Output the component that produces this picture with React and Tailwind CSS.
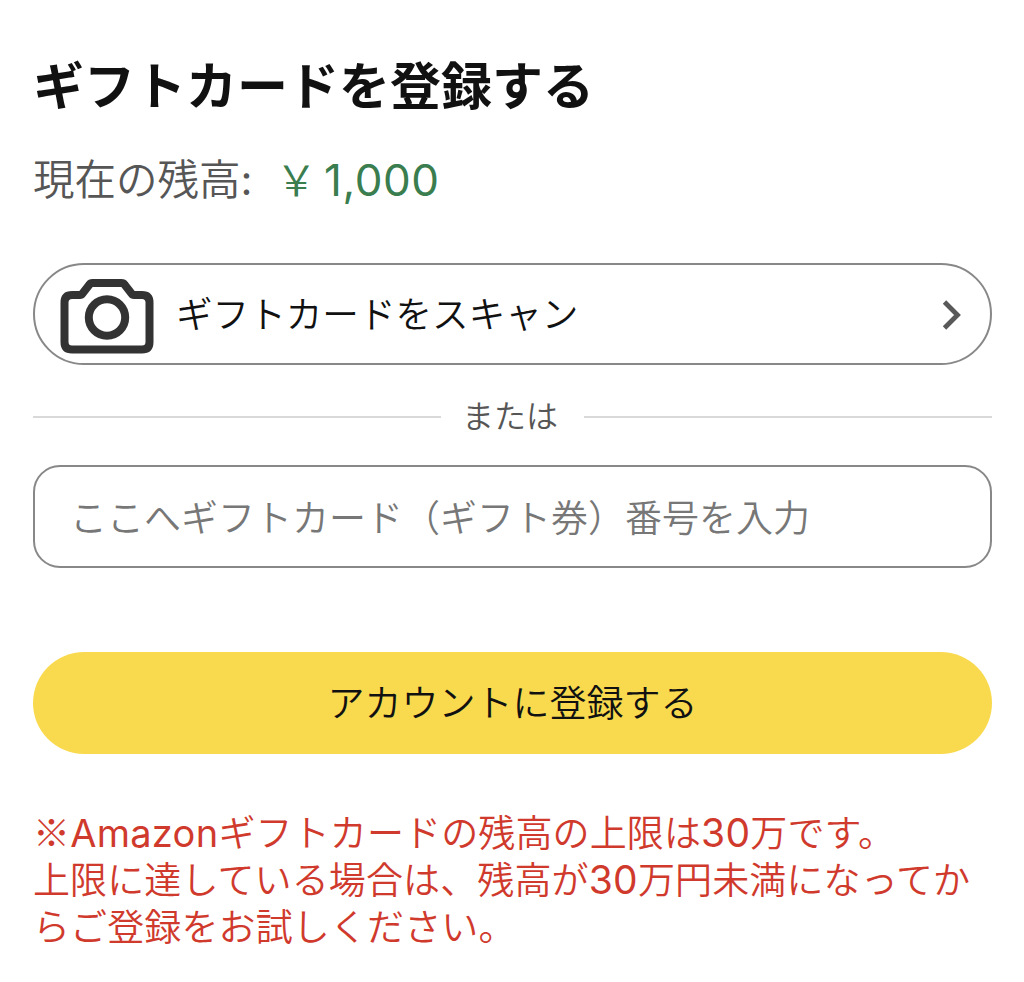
export default function App() {
  return (
    <main className="h-[982px] w-[1024px] overflow-hidden bg-white px-[33px] pt-[48px] font-['Noto_Sans_CJK_JP',sans-serif] font-[350] text-[#111]">
      <h1 className="h-[70px] whitespace-nowrap text-[51px] leading-[70px] font-bold">ギフトカードを登録する</h1>
      <div className="mt-[31px] flex h-[60px] items-center whitespace-nowrap text-[41.5px] text-[#565656]">
        <span>現在の残高<span className="font-['Inter',sans-serif] font-normal">:</span></span>
        <span className="-mt-[2px] ml-[23px] text-[#3a7d4e]">￥<span className="ml-[7px] font-['Inter',sans-serif] text-[44px] leading-none font-normal tracking-[0.6px]">1,000</span></span>
      </div>
      <button className="mt-[54px] flex h-[102px] w-[959px] items-center rounded-full border-2 border-[#888] pr-[28px] pl-[25px]">
        <svg className="mt-[5px]" width="94" height="75" viewBox="0 0 94 75" fill="none" stroke="#333" strokeWidth="8" strokeLinejoin="round">
          <path d="M12 16H20Q21.500 16 22.500 14.500L29.500 5.500Q30.500 4 32.500 4H61.500Q63.500 4 64.500 5.500L71.500 14.500Q72.500 16 74 16H82Q89.500 16 89.500 23.500V63Q89.500 70.500 82 70.500H12Q4.500 70.500 4.500 63V23.500Q4.500 16 12 16Z" />
          <circle cx="47" cy="38.500" r="18.200" />
        </svg>
        <span className="-mt-[3px] ml-[22px] whitespace-nowrap text-[36.6px] leading-[50px]">ギフトカードをスキャン</span>
        <svg className="mt-[2px] ml-auto" width="20" height="32" viewBox="0 0 20 32" fill="none" stroke="#595959" strokeWidth="4.800">
          <path d="M2.500 3L15.500 16L2.500 29" />
        </svg>
      </button>
      <div className="flex h-[100px] w-[959px] items-center text-[32px] text-[#565656]">
        <span className="mt-[3px] h-[2px] w-[408px] bg-[#d9d9d9]" />
        <span className="-mt-[3px] w-[143px] pr-[5px] text-center whitespace-nowrap">または</span>
        <span className="mt-[3px] h-[2px] w-[408px] bg-[#d9d9d9]" />
      </div>
      <div className="flex h-[103px] w-[959px] items-center rounded-[27px] border-2 border-[#888] px-[35px]">
        <span className="mt-[1px] whitespace-nowrap text-[37px] text-[#777]">ここへギフトカード（ギフト券）番号を入力</span>
      </div>
      <button className="mt-[84px] flex h-[102px] w-[959px] items-center justify-center rounded-full bg-[#f9da4f] pb-[2px] text-[37px]">アカウントに登録する</button>
      <p className="mt-[54px] whitespace-nowrap text-[37px] leading-[47px] tracking-[0.12px] text-[#d03a2d]">
        ※<span className="font-['Inter',sans-serif] text-[38px] leading-none font-normal tracking-[0.3px]">Amazon</span>ギフトカードの残高の上限は<span className="font-['Inter',sans-serif] text-[39px] leading-none font-normal tracking-[0.3px]">30</span>万です。<br />上限に達している場合は、残高が<span className="font-['Inter',sans-serif] text-[39px] leading-none font-normal tracking-[0.3px]">30</span>万円未満になってか<br />らご登録をお試しください。
      </p>
    </main>
  );
}
